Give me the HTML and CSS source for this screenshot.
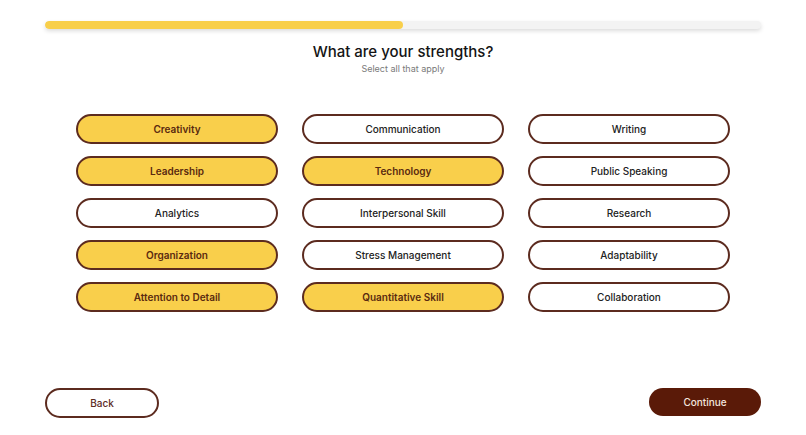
FILE: index.html
```html
<!DOCTYPE html>
<html lang="en">
<head>
<meta charset="utf-8">
<title>What are your strengths?</title>
<link rel="stylesheet" href="styles.css">
</head>
<body>
<div class="page">
  <div class="progress"><div class="progress-fill" style="width:50%"></div></div>
  <h1 class="title">What are your strengths?</h1>
  <p class="subtitle">Select all that apply</p>
  <div class="options">
    <button class="chip selected">Creativity</button>
    <button class="chip">Communication</button>
    <button class="chip">Writing</button>
    <button class="chip selected">Leadership</button>
    <button class="chip selected">Technology</button>
    <button class="chip">Public Speaking</button>
    <button class="chip">Analytics</button>
    <button class="chip">Interpersonal Skill</button>
    <button class="chip">Research</button>
    <button class="chip selected">Organization</button>
    <button class="chip">Stress Management</button>
    <button class="chip">Adaptability</button>
    <button class="chip selected">Attention to Detail</button>
    <button class="chip selected">Quantitative Skill</button>
    <button class="chip">Collaboration</button>
  </div>
  <div class="footer">
    <button class="btn-back">Back</button>
    <button class="btn-continue">Continue</button>
  </div>
</div>
</body>
</html>
```

FILE: styles.css
```css
* { box-sizing: border-box; }
html, body { margin: 0; padding: 0; background: #ffffff; }
body {
  font-family: "Inter", "Noto Sans", "Liberation Sans", sans-serif;
  color: #1a1a1a;
}
.page {
  height: 435px;
  padding: 21px 45px 17px 45px;
  display: flex;
  flex-direction: column;
}
.progress {
  height: 8px;
  border-radius: 4px;
  background: #f3f3f3;
  box-shadow: 0 2px 4px rgba(0, 0, 0, 0.14);
  overflow: hidden;
  width: 716px;
}
.progress-fill {
  height: 100%;
  background: #f8cf4b;
  border-radius: 4px;
}
.title {
  margin: 12px 0 0 0;
  font-size: 15px;
  line-height: 22px;
  font-weight: 500;
  text-align: center;
  color: #141414;
}
.subtitle {
  margin: -1px 0 0 0;
  font-size: 9px;
  line-height: 14px;
  text-align: center;
  color: #7a7a7a;
}
.options {
  margin: 38px 31px 0 31px;
  display: grid;
  grid-template-columns: repeat(3, 1fr);
  column-gap: 24px;
  row-gap: 12px;
}
.chip {
  height: 30px;
  border: 2px solid #5c2b1f;
  border-radius: 15px;
  background: #ffffff;
  font-family: inherit;
  font-size: 10px;
  font-weight: 500;
  color: #222222;
  padding: 0;
  cursor: pointer;
}
.chip.selected {
  background: #f9cf4b;
  color: #5a2a10;
  font-weight: 600;
}
.footer {
  margin-top: auto;
  display: flex;
  justify-content: space-between;
  align-items: flex-start;
}
.btn-back {
  width: 114px;
  height: 30px;
  border: 2px solid #5c2b1f;
  border-radius: 15px;
  background: #ffffff;
  font-family: inherit;
  font-size: 10px;
  font-weight: 500;
  color: #5c2b1f;
}
.btn-continue {
  width: 112px;
  height: 28px;
  border: none;
  border-radius: 14px;
  background: #5a1a08;
  font-family: inherit;
  font-size: 10px;
  font-weight: 500;
  color: #f4e6df;
}
```
